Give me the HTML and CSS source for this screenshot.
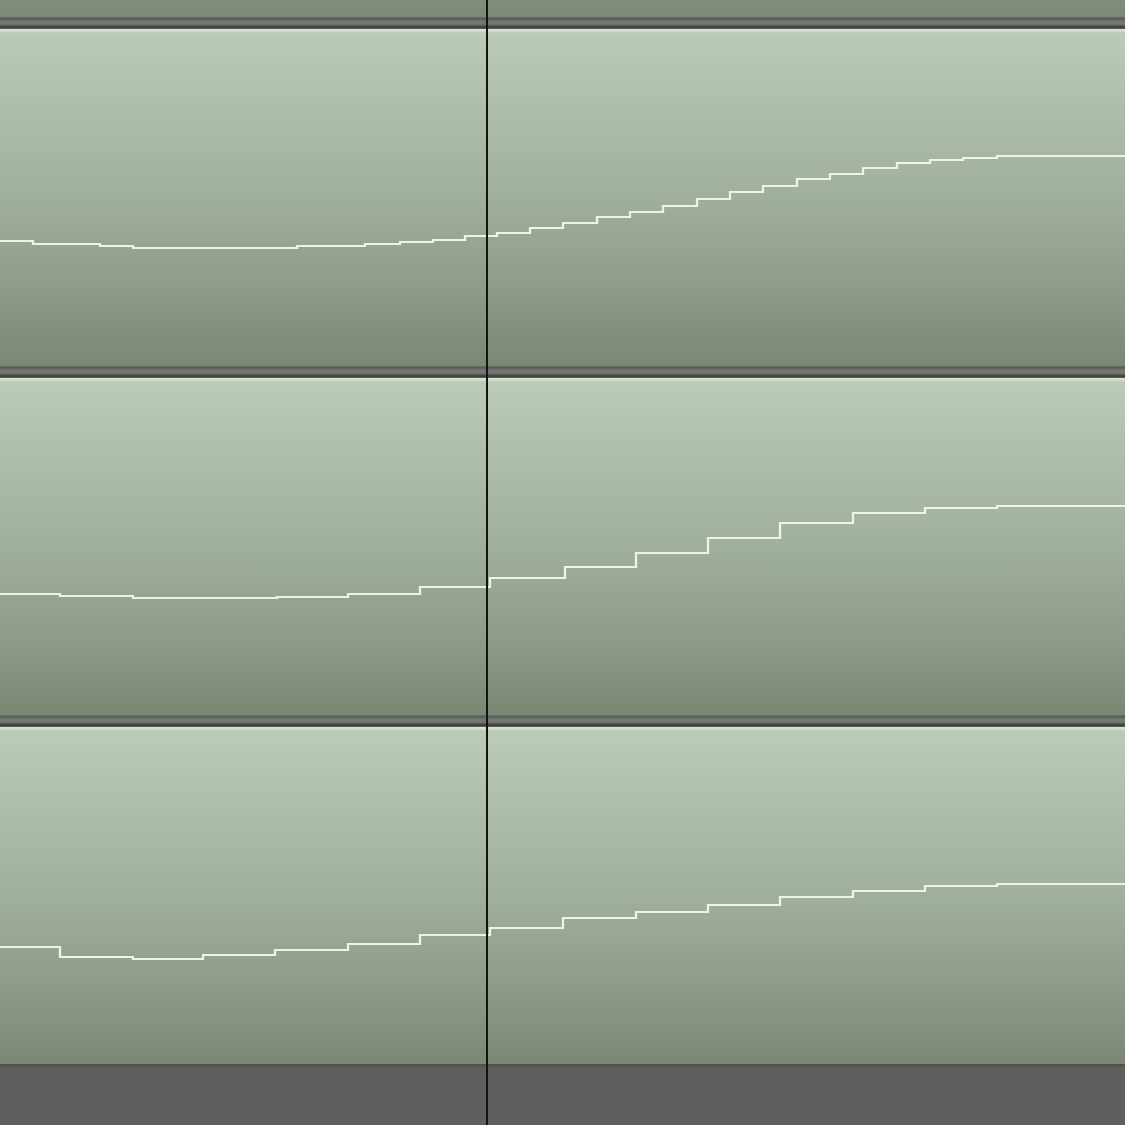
FILE: index.html
```html
<!DOCTYPE html>
<html lang="en">
<head>
  <meta charset="UTF-8" />
  <title>Automation Lanes</title>
  <link rel="stylesheet" href="styles.css">
</head>
<body>
  <div class="arrange">

    <div class="lane-tail"></div>
    <div class="divider"></div>

    <!-- Lane 1 -->
    <div class="lane">
      <svg class="env" viewBox="0 0 1125 337" preserveAspectRatio="none">
        <path d="M0 212 H33 V215 H100 V217 H133 V219 H297 V217 H365 V215 H400 V213 H433 V211 H465 V207 H497 V204 H530 V199 H563 V194 H597 V188 H630 V183 H663 V177 H697 V170 H730 V163 H763 V157 H797 V150 H830 V145 H863 V139 H897 V134 H930 V131 H963 V129 H997 V127 H1125" />
      </svg>
    </div>
    <div class="divider"></div>

    <!-- Lane 2 -->
    <div class="lane">
      <svg class="env" viewBox="0 0 1125 337" preserveAspectRatio="none">
        <path d="M0 216 H60 V218 H133 V220 H277 V219 H348 V216 H420 V209 H490 V200 H565 V189 H636 V175 H708 V160 H780 V145 H853 V135 H925 V130 H997 V128 H1125" />
      </svg>
    </div>
    <div class="divider"></div>

    <!-- Lane 3 -->
    <div class="lane">
      <svg class="env" viewBox="0 0 1125 337" preserveAspectRatio="none">
        <path d="M0 220 H60 V230 H133 V232 H203 V228 H275 V223 H348 V217 H420 V208 H490 V201 H563 V191 H636 V185 H708 V178 H780 V170 H853 V164 H925 V159 H997 V157 H1125" />
      </svg>
    </div>

    <div class="empty-area"></div>

    <!-- play cursor -->
    <div class="cursor"></div>
  </div>
</body>
</html>
```

FILE: styles.css
```css
html, body {
  margin: 0;
  padding: 0;
  width: 1125px;
  height: 1125px;
  overflow: hidden;
  background: #5f5f5f;
  font-family: 'Liberation Sans', Arial, sans-serif;
}

.arrange {
  position: relative;
  display: flex;
  flex-direction: column;
  width: 1125px;
  height: 1125px;
}

.lane-tail {
  height: 17px;
  background: linear-gradient(#808d7c, #7a8875);
}

.divider {
  height: 12px;
  background: linear-gradient(
    #6a7167 0px,
    #535852 2px,
    #6c6f6a 3px,
    #777975 6px,
    #6a6d69 8px,
    #484c47 9px,
    #3d413c 11px,
    #6e7a6b 12px
  );
}

.lane {
  height: 337px;
  background: linear-gradient(
    #dbe6d5 0px,
    #d0ddca 2px,
    #bccbb8 4px,
    #b1c1ad 60px,
    #a0af9b 170px,
    #8d9b88 260px,
    #798773 337px
  );
}

.env {
  display: block;
  width: 1125px;
  height: 337px;
  filter: drop-shadow(0 0 0.6px rgba(240, 245, 225, 0.6));
}

.env path {
  fill: none;
  stroke: #eff3e2;
  stroke-width: 2.2;
}

.empty-area {
  flex: 1;
  background: linear-gradient(#4c4d4c 0px, #585858 2px, #5f5f5f 4px);
}

.cursor {
  position: absolute;
  top: 0;
  bottom: 0;
  left: 486px;
  width: 2px;
  background: #121412;
}
```
